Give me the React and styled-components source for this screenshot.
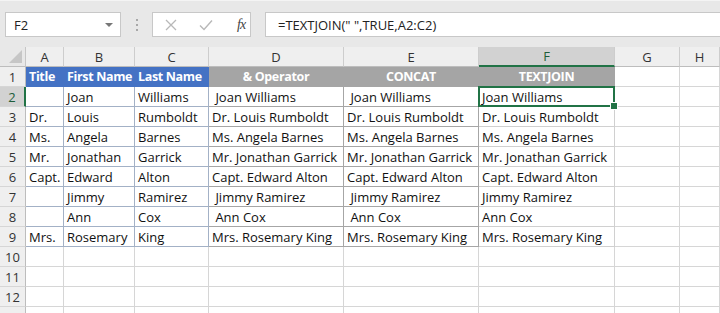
import React from 'react';
import styled, { createGlobalStyle } from 'styled-components';

const GlobalStyle = createGlobalStyle`
  html, body {
    margin: 0;
    padding: 0;
    background: #ffffff;
    overflow: hidden;
  }
  body {
    font-family: 'Open Sans', 'Noto Sans', sans-serif;
  }
`;

const COLS = ['A', 'B', 'C', 'D', 'E', 'F', 'G', 'H'];
const WIDTHS = '26px 38px 71px 74px 135px 135px 136px 65px 1fr';

const ROWS = [
  ['', 'Joan', 'Williams', ' Joan Williams', ' Joan Williams', 'Joan Williams'],
  ['Dr.', 'Louis', 'Rumboldt', 'Dr. Louis Rumboldt', 'Dr. Louis Rumboldt', 'Dr. Louis Rumboldt'],
  ['Ms.', 'Angela', 'Barnes', 'Ms. Angela Barnes', 'Ms. Angela Barnes', 'Ms. Angela Barnes'],
  ['Mr.', 'Jonathan', 'Garrick', 'Mr. Jonathan Garrick', 'Mr. Jonathan Garrick', 'Mr. Jonathan Garrick'],
  ['Capt.', 'Edward', 'Alton', 'Capt. Edward Alton', 'Capt. Edward Alton', 'Capt. Edward Alton'],
  ['', 'Jimmy', 'Ramirez', ' Jimmy Ramirez', ' Jimmy Ramirez', 'Jimmy Ramirez'],
  ['', 'Ann', 'Cox', ' Ann Cox', ' Ann Cox', 'Ann Cox'],
  ['Mrs.', 'Rosemary', 'King', 'Mrs. Rosemary King', 'Mrs. Rosemary King', 'Mrs. Rosemary King'],
];

const HEADERS = ['Title', 'First Name', 'Last Name', '& Operator', 'CONCAT', 'TEXTJOIN'];

const Page = styled.div`
  width: 720px;
  height: 313px;
  overflow: hidden;
  background: #ffffff;
`;

const FormulaBar = styled.div`
  height: 47px;
  background: #e8e8e8;
  display: flex;
  align-items: flex-start;
  padding: 11px 0 0 5px;
  box-sizing: border-box;
  border-top: 1px solid #f4f4f4;
`;

const NameBox = styled.div`
  width: 116px;
  height: 25px;
  box-sizing: border-box;
  background: #ffffff;
  border: 1px solid #c8c8c8;
  display: flex;
  align-items: center;
  justify-content: space-between;
  padding: 0 7px 0 8px;
  font-size: 13px;
  color: #222;
`;

const Caret = styled.span`
  width: 0;
  height: 0;
  border-left: 4px solid transparent;
  border-right: 4px solid transparent;
  border-top: 4px solid #777;
`;

const Grip = styled.div`
  width: 31px;
  height: 25px;
  display: flex;
  flex-direction: column;
  align-items: center;
  justify-content: center;
  gap: 3px;
  span {
    width: 2px;
    height: 2px;
    background: #a8a8a8;
  }
`;

const ActionBox = styled.div`
  width: 99px;
  height: 25px;
  box-sizing: border-box;
  background: #ffffff;
  border: 1px solid #c8c8c8;
  display: flex;
  align-items: center;
  padding: 0 0 0 12px;
  gap: 22px;
`;

const Fx = styled.span`
  font-family: 'Liberation Serif', serif;
  font-style: italic;
  font-size: 14px;
  color: #444;
  letter-spacing: -1px;
  margin-left: 2px;
`;

const FormulaInput = styled.div`
  flex: 1;
  margin-left: 14px;
  height: 25px;
  box-sizing: border-box;
  background: #ffffff;
  border: 1px solid #c8c8c8;
  border-right: none;
  display: flex;
  align-items: center;
  padding-left: 12px;
  font-size: 13px;
  color: #222;
  white-space: pre;
`;

const Grid = styled.div`
  display: grid;
  grid-template-columns: ${WIDTHS};
  grid-auto-rows: 20px;
  font-family: 'Open Sans', 'Noto Sans', sans-serif;
`;

const Corner = styled.div`
  background: #e8e8e8;
  border-right: 1px solid #c6c6c6;
  border-bottom: 1px solid #bdbdbd;
  box-sizing: border-box;
  position: relative;
  &::after {
    content: '';
    position: absolute;
    right: 3px;
    bottom: 3px;
    width: 0;
    height: 0;
    border-left: 13px solid transparent;
    border-bottom: 13px solid #c6c6c6;
  }
`;

const ColHead = styled.div`
  background: ${(p) => (p.$active ? '#d2d2d2' : '#efefef')};
  color: ${(p) => (p.$active ? '#1e5e3a' : '#333')};
  border-right: 1px solid #cdcdcd;
  border-bottom: ${(p) => (p.$active ? '2px solid #217346' : '1px solid #bdbdbd')};
  box-sizing: border-box;
  display: flex;
  align-items: center;
  justify-content: center;
  font-size: 13px;
`;

const RowHead = styled.div`
  background: ${(p) => (p.$active ? '#d2d2d2' : '#efefef')};
  color: ${(p) => (p.$active ? '#1e5e3a' : '#333')};
  border-right: ${(p) => (p.$active ? '2px solid #217346' : '1px solid #bdbdbd')};
  border-bottom: 1px solid #d6d6d6;
  box-sizing: border-box;
  display: flex;
  align-items: center;
  justify-content: center;
  font-size: 13px;
`;

const Cell = styled.div`
  position: relative;
  box-sizing: border-box;
  padding: 0 3px;
  display: flex;
  align-items: center;
  justify-content: ${(p) => (p.$center ? 'center' : 'flex-start')};
  white-space: pre;
  overflow: visible;
  font-size: ${(p) => (p.$bold ? '12.5px' : '13px')};
  letter-spacing: ${(p) => (p.$bold ? '-0.35px' : 'normal')};
  color: #111;
  font-weight: ${(p) => (p.$bold ? 700 : 400)};
  background: ${(p) => p.$bg || '#ffffff'};
  ${(p) => p.$bg && 'color: #ffffff;'}
  border-right: 1px solid ${(p) => p.$line || '#d6d6d6'};
  border-bottom: 1px solid ${(p) => p.$line || '#d6d6d6'};
  ${(p) =>
    p.$selected &&
    `
    &::after {
      content: '';
      position: absolute;
      left: -1px;
      top: -1px;
      right: -1px;
      bottom: -1px;
      border: 2px solid #217346;
      pointer-events: none;
    }
    &::before {
      content: '';
      position: absolute;
      right: -4px;
      bottom: -4px;
      width: 6px;
      height: 6px;
      background: #217346;
      border: 1px solid #ffffff;
      z-index: 2;
    }
  `}
`;

const CrossIcon = () => (
  <svg width="12" height="12" viewBox="0 0 12 12">
    <path d="M1 1 L11 11 M11 1 L1 11" stroke="#b8b8b8" strokeWidth="1.3" fill="none" />
  </svg>
);

const CheckIcon = () => (
  <svg width="14" height="12" viewBox="0 0 14 12">
    <path d="M1 6.5 L5 10.5 L13 1.5" stroke="#b8b8b8" strokeWidth="1.4" fill="none" />
  </svg>
);

const lineFor = (col, row) => {
  if (row === 0) return col < 3 ? '#4472c4' : '#a5a5a5';
  if (col < 3) return '#a3b1c6';
  if (col < 5) return '#a6a6a6';
  return '#d0d0d0';
};

export default function App() {
  const rows = [];
  for (let r = 1; r <= 13; r++) {
    const active = r === 2;
    // row 13 sits below the window edge; only its top border line shows
    rows.push(
      <RowHead key={`h${r}`} $active={active}>
        {r < 13 ? r : ''}
      </RowHead>
    );
    for (let c = 0; c < 8; c++) {
      let text = '';
      let bg;
      let bold = false;
      let center = false;
      let line;
      if (r === 1 && c < 6) {
        text = HEADERS[c];
        bg = c < 3 ? '#4472c4' : '#a5a5a5';
        bold = true;
        center = c >= 3;
        line = lineFor(c, 0);
      } else if (r <= 9 && c < 6) {
        text = ROWS[r - 2][c];
        line = lineFor(c, r - 1);
      }
      rows.push(
        <Cell
          key={`${r}-${c}`}
          $bg={bg}
          $bold={bold}
          $center={center}
          $line={line}
          $selected={r === 2 && c === 5}
        >
          {text}
        </Cell>
      );
    }
  }

  return (
    <Page>
      <GlobalStyle />
      <FormulaBar>
        <NameBox>
          F2
          <Caret />
        </NameBox>
        <Grip>
          <span />
          <span />
          <span />
        </Grip>
        <ActionBox>
          <CrossIcon />
          <CheckIcon />
          <Fx>fx</Fx>
        </ActionBox>
        <FormulaInput>=TEXTJOIN(" ",TRUE,A2:C2)</FormulaInput>
      </FormulaBar>
      <Grid>
        <Corner />
        {COLS.map((c) => (
          <ColHead key={c} $active={c === 'F'}>
            {c}
          </ColHead>
        ))}
        {rows}
      </Grid>
    </Page>
  );
}
